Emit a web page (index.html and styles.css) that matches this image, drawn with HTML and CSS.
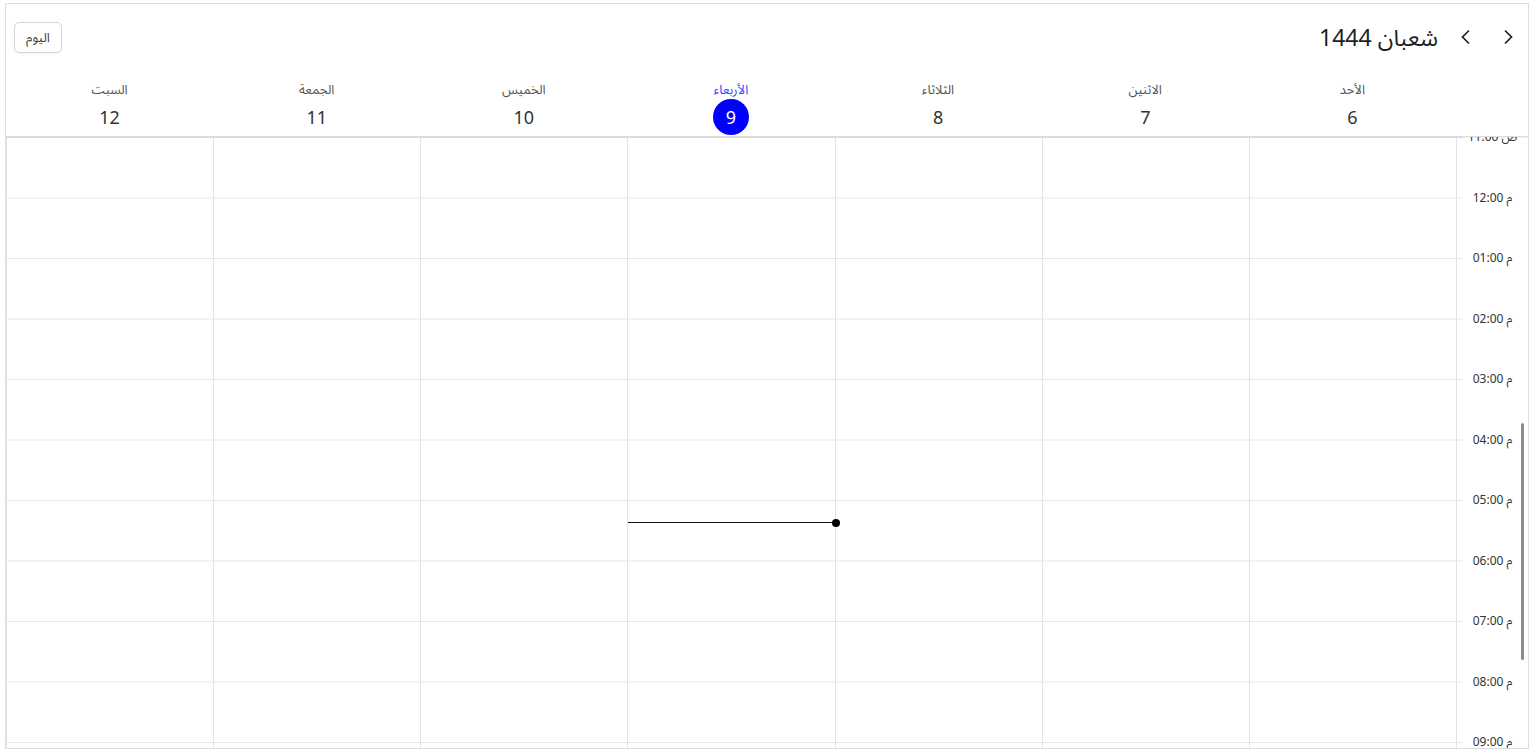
FILE: index.html
```html
<!DOCTYPE html>
<html lang="ar" dir="rtl">
<head>
<meta charset="utf-8">
<title>Scheduler</title>
<link rel="stylesheet" href="styles.css">
</head>
<body>
<div class="scheduler">
  <div class="toolbar">
    <div class="nav">
      <button class="nav-btn" aria-label="السابق">
        <svg width="10" height="16" viewBox="0 0 10 16"><path d="M2 1.5 L8.5 8 L2 14.5" fill="none" stroke="#1f1f1f" stroke-width="1.7"/></svg>
      </button>
      <button class="nav-btn" aria-label="التالي">
        <svg width="10" height="16" viewBox="0 0 10 16"><path d="M8 1.5 L1.5 8 L8 14.5" fill="none" stroke="#1f1f1f" stroke-width="1.7"/></svg>
      </button>
      <div class="title">شعبان 1444</div>
    </div>
    <button class="today-btn">اليوم</button>
  </div>

  <div class="head">
    <div class="head-time"></div>
    <div class="day"><div class="dname">الأحد</div><div class="dnum">6</div></div>
    <div class="day"><div class="dname">الاثنين</div><div class="dnum">7</div></div>
    <div class="day"><div class="dname">الثلاثاء</div><div class="dnum">8</div></div>
    <div class="day is-today"><div class="dname">الأربعاء</div><div class="dnum">9</div></div>
    <div class="day"><div class="dname">الخميس</div><div class="dnum">10</div></div>
    <div class="day"><div class="dname">الجمعة</div><div class="dnum">11</div></div>
    <div class="day"><div class="dname">السبت</div><div class="dnum">12</div></div>
  </div>

  <div class="body">
    <div class="tcol">
      <div class="tlist">
        <div class="tcell"><span dir="ltr">11:00 ص</span></div>
        <div class="tcell"><span dir="ltr">12:00 م</span></div>
        <div class="tcell"><span dir="ltr">01:00 م</span></div>
        <div class="tcell"><span dir="ltr">02:00 م</span></div>
        <div class="tcell"><span dir="ltr">03:00 م</span></div>
        <div class="tcell"><span dir="ltr">04:00 م</span></div>
        <div class="tcell"><span dir="ltr">05:00 م</span></div>
        <div class="tcell"><span dir="ltr">06:00 م</span></div>
        <div class="tcell"><span dir="ltr">07:00 م</span></div>
        <div class="tcell"><span dir="ltr">08:00 م</span></div>
        <div class="tcell"><span dir="ltr">09:00 م</span></div>
      </div>
    </div>
    <div class="col"></div>
    <div class="col"></div>
    <div class="col"></div>
    <div class="col col-today"><div class="now"></div></div>
    <div class="col"></div>
    <div class="col"></div>
    <div class="col"></div>
    <div class="scrollbar"></div>
  </div>
</div>
</body>
</html>
```

FILE: styles.css
```css
* { box-sizing: border-box; }

html, body {
  margin: 0;
  padding: 0;
  background: #ffffff;
}

body {
  font-family: "Segoe UI", "Noto Sans", "Noto Sans Arabic", "DejaVu Sans", sans-serif;
  color: #333333;
}

.scheduler {
  margin: 3px 7px 0 5px;
  width: 1524px;
  height: 746px;
  border: 1px solid #dedede;
  display: flex;
  flex-direction: column;
  overflow: hidden;
}

/* toolbar */
.toolbar {
  height: 66px;
  flex: none;
  display: flex;
  align-items: center;
  justify-content: space-between;
  padding: 0 4px 0 8px;
}

.nav {
  display: flex;
  align-items: center;
  gap: 10px;
}

.nav-btn {
  width: 32px;
  height: 32px;
  border: 0;
  background: transparent;
  padding: 0;
  display: flex;
  align-items: center;
  justify-content: center;
  cursor: pointer;
}

.title {
  margin-right: 2px;
  font-size: 23px;
  color: #1f1f1f;
  line-height: 30px;
  white-space: nowrap;
}

.today-btn {
  width: 48px;
  height: 31px;
  margin-top: 1px;
  border: 1px solid #d4d4d4;
  border-radius: 5px;
  background: #ffffff;
  font-family: inherit;
  font-size: 13px;
  color: #444444;
  padding: 0;
  box-shadow: 0 1px 1px rgba(0,0,0,0.04);
}

/* day header */
.head {
  height: 67px;
  flex: none;
  display: grid;
  grid-template-columns: 72px repeat(7, 1fr);
  border-bottom: 1px solid #dcdcdc;
  box-shadow: 0 1px 1px rgba(0,0,0,0.05);
  position: relative;
  z-index: 1;
}

.day {
  display: flex;
  flex-direction: column;
  align-items: center;
  padding-top: 9px;
}

.dname {
  height: 20px;
  line-height: 20px;
  font-size: 13px;
  color: #555555;
}

.dnum {
  width: 36px;
  height: 36px;
  line-height: 36px;
  border-radius: 50%;
  text-align: center;
  font-size: 18px;
  color: #333333;
}

.is-today .dname { color: #4040ff; }

.is-today .dnum {
  background: #0000ff;
  color: #ffffff;
}

/* body */
.body {
  flex: 1;
  display: grid;
  grid-template-columns: 72px repeat(7, 1fr);
  overflow: hidden;
  position: relative;
}

.tcol {
  overflow: hidden;
  border-left: 1px solid #e3e3e3;
  background-image: linear-gradient(#e6e6e6 1px, transparent 1px);
  background-size: 6px 60.5px;
  background-repeat: repeat-y;
  background-position: left top;
}

.tlist {
  margin-top: -8px;
}

.tcell {
  height: 60.5px;
  line-height: 16px;
  font-size: 12px;
  color: #333333;
  text-align: center;
}

.col {
  border-left: 1px solid #e3e3e3;
  background-image: linear-gradient(#e6e6e6 1px, transparent 1px);
  background-size: 100% 60.5px;
  background-position: 0 0;
  position: relative;
}

.now {
  position: absolute;
  top: 385px;
  left: 0;
  right: 0;
  height: 1px;
  background: #111111;
}

.now::after {
  content: "";
  position: absolute;
  right: -5px;
  top: -3.5px;
  width: 8px;
  height: 8px;
  border-radius: 50%;
  background: #000000;
}

.scrollbar {
  position: absolute;
  right: 4px;
  top: 286px;
  width: 3px;
  height: 237px;
  border-radius: 2px;
  background: #8c8c8c;
}
```
